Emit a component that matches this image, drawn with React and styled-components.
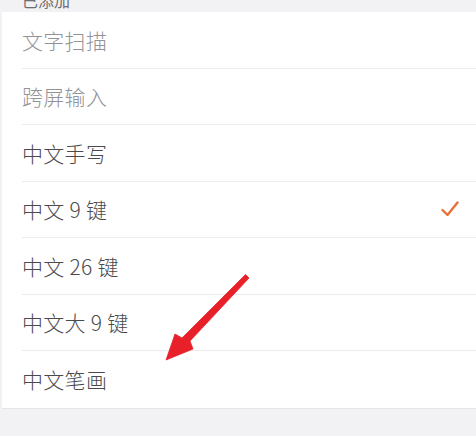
import React from 'react';
import styled, { createGlobalStyle } from 'styled-components';

const GlobalStyle = createGlobalStyle`
  html, body {
    margin: 0;
    padding: 0;
    background: #f2f2f4;
    font-family: "Noto Sans CJK SC", "Noto Sans", sans-serif;
  }
`;

const Page = styled.div`
  position: relative;
  width: 476px;
  height: 436px;
  overflow: hidden;
  background: #f2f2f4;
`;

const Header = styled.div`
  height: 12px;
  display: flex;
  align-items: flex-end;
  padding-left: 22px;
  box-sizing: border-box;
  overflow: hidden;
`;

const HeaderText = styled.span`
  font-size: 16px;
  line-height: 16px;
  color: #6d6d72;
  margin-bottom: 4px;
`;

const Card = styled.div`
  margin-left: 2px;
  background: #fff;
  border-bottom: 1px solid #e6e6e8;
`;

const Row = styled.div`
  height: 56.5px;
  margin-left: 20px;
  padding-right: 16px;
  display: flex;
  align-items: center;
  justify-content: space-between;
  box-sizing: border-box;
  border-bottom: ${p => (p.last ? 'none' : '1px solid #ececee')};
`;

const Label = styled.span`
  font-size: 21px;
  font-weight: 300;
  color: ${p => (p.disabled ? '#939397' : '#4a4a4c')};
  letter-spacing: 0.3px;
`;

const Check = styled.svg`
  width: 20px;
  height: 20px;
  margin-right: 0;
`;

const Arrow = styled.svg`
  position: absolute;
  left: 0;
  top: 0;
  pointer-events: none;
`;

const items = [
  { label: '文字扫描', disabled: true },
  { label: '跨屏输入', disabled: true },
  { label: '中文手写' },
  { label: '中文 9 键', checked: true },
  { label: '中文 26 键' },
  { label: '中文大 9 键' },
  { label: '中文笔画' },
];

export default function App() {
  return (
    <>
      <GlobalStyle />
      <Page>
        <Header>
          <HeaderText>已添加</HeaderText>
        </Header>
        <Card>
          {items.map((it, i) => (
            <Row key={it.label} last={i === items.length - 1}>
              <Label disabled={it.disabled}>{it.label}</Label>
              {it.checked && (
                <Check viewBox="0 0 20 20">
                  <path
                    d="M2.5 11 L7.5 16 L17.5 3.5"
                    fill="none"
                    stroke="#e8703a"
                    strokeWidth="2.4"
                    strokeLinecap="round"
                    strokeLinejoin="round"
                  />
                </Check>
              )}
            </Row>
          ))}
        </Card>
        <Arrow width="476" height="436" viewBox="0 0 476 436">
          <path
            d="M245.5 274.5 L249 278 L190 341 L193 349 L166 360 L175 334 L182 338 Z"
            fill="#e8202a"
            stroke="#e8202a"
            strokeWidth="0.8"
            strokeLinejoin="round"
          />
        </Arrow>
      </Page>
    </>
  );
}
